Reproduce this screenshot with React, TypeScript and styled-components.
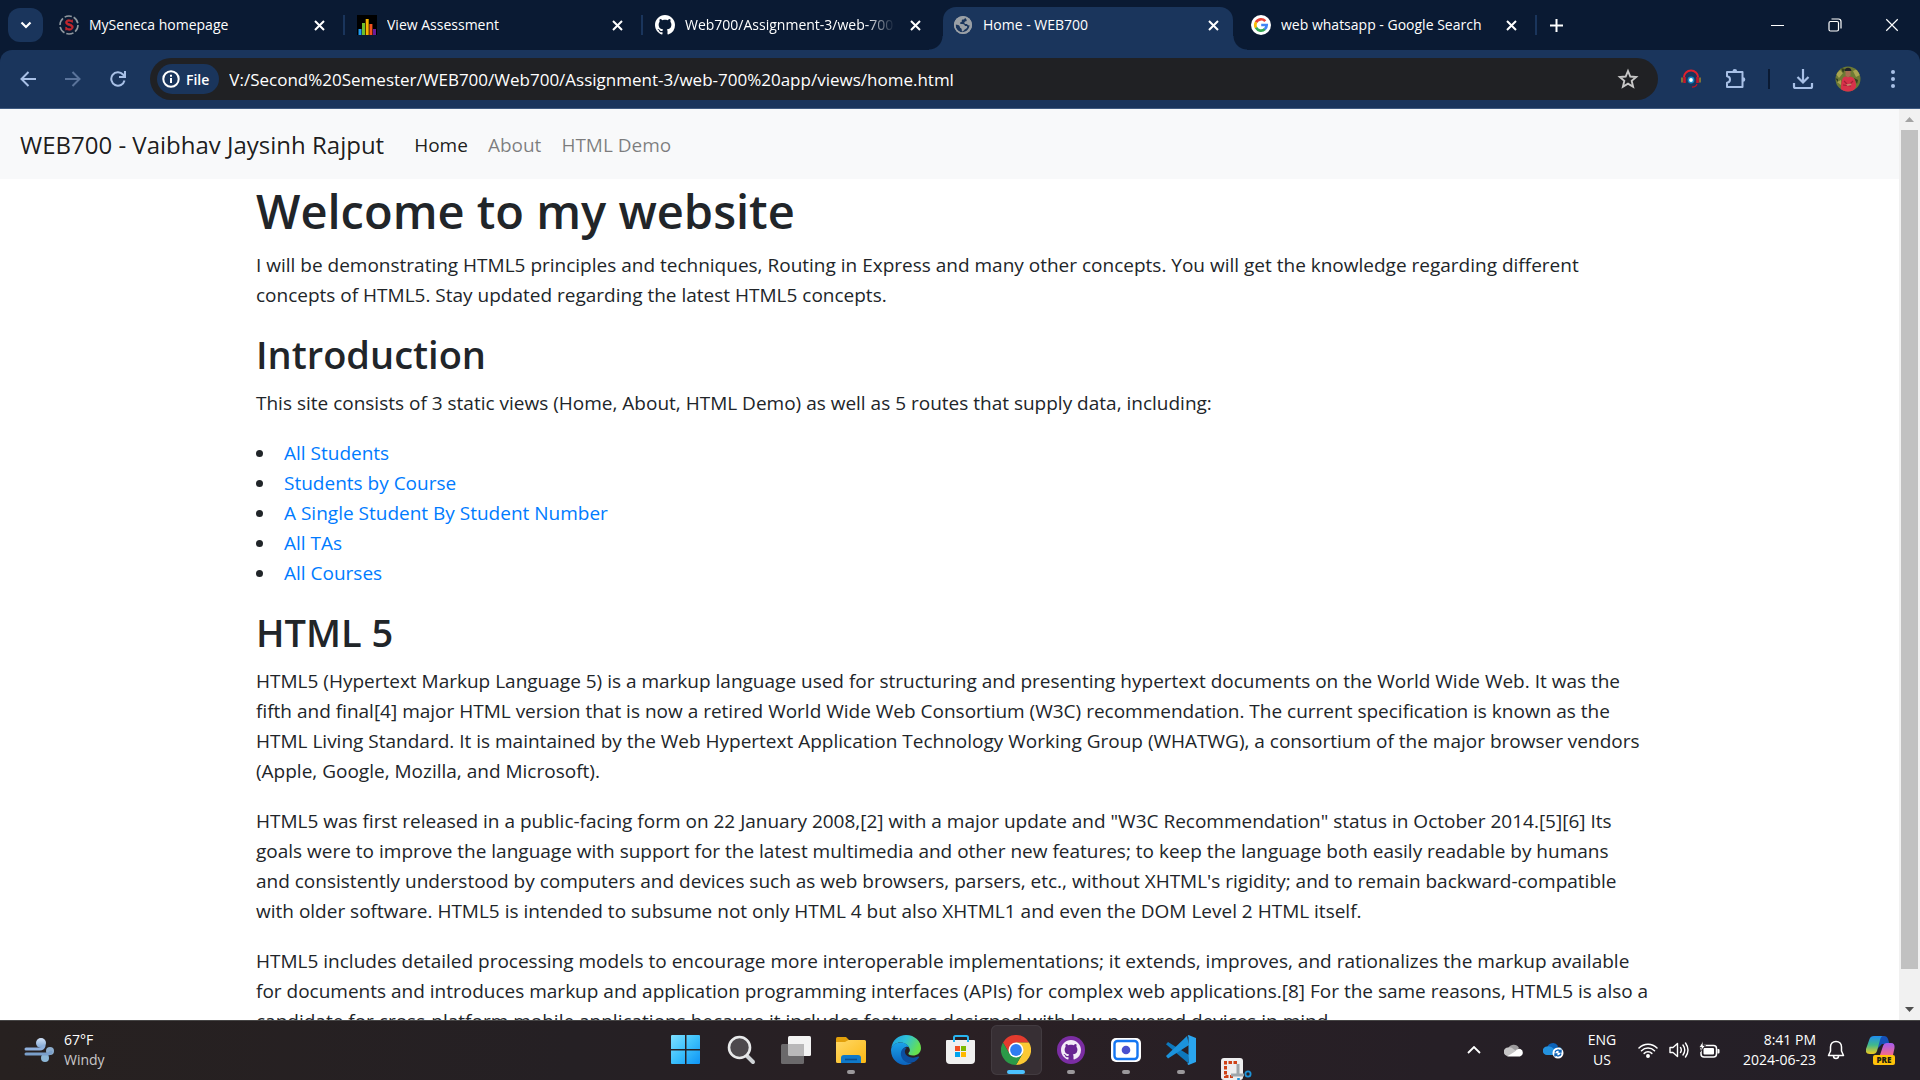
import React from "react";
import styled, { createGlobalStyle, css } from "styled-components";

const GlobalStyle = createGlobalStyle`
  *, *::before, *::after { box-sizing: border-box; }
  body {
    margin: 0;
    font-family: "Open Sans", "Noto Sans", sans-serif;
    overflow: hidden;
  }
  button { font: inherit; color: inherit; background: none; border: 0; padding: 0; cursor: pointer; }
  svg { display: block; flex: none; }
`;

const Desktop = styled.div`
  height: 100vh;
  display: flex;
  flex-direction: column;
  background: #fff;
`;

/* ---------- Browser tab strip ---------- */

const TabStrip = styled.header`
  flex: none;
  height: 50px;
  display: flex;
  align-items: center;
  padding-left: 8px;
  background: #0a1a33;
  color: #fff;
`;

const TabSearch = styled.button`
  flex: none;
  width: 35px;
  height: 34px;
  margin-right: 6px;
  border-radius: 12px;
  background: #1a355c;
  display: grid;
  place-items: center;
`;

const TabList = styled.nav`
  flex: 0 1 1490px;
  display: flex;
  align-self: stretch;
  min-width: 0;
`;

const Tab = styled.div<{ $active?: boolean; $divider?: boolean }>`
  position: relative;
  flex: 1;
  min-width: 0;
  display: flex;
  align-items: center;
  gap: 10px;
  padding: 0 18px 0 10px;
  font-size: 14px;
  line-height: 20px;

  ${(p) =>
    p.$divider &&
    css`
      &::after {
        content: "";
        position: absolute;
        right: 2px;
        top: 15px;
        width: 2px;
        height: 20px;
        background: #1a355c;
      }
    `}

  ${(p) =>
    p.$active &&
    css`
      &::before {
        content: "";
        position: absolute;
        inset: 7px 8px 0 0;
        border-radius: 13px 13px 0 0;
        background: #1a355c;
      }
    `}
`;

const TabFlare = styled.span<{ $side: "left" | "right" }>`
  position: absolute;
  bottom: 0;
  width: 14px;
  height: 14px;
  ${(p) =>
    p.$side === "left"
      ? css`
          left: -14px;
          background: radial-gradient(circle at 0 0, transparent 13px, #1a355c 14px);
        `
      : css`
          right: -6px;
          background: radial-gradient(circle at 100% 0, transparent 13px, #1a355c 14px);
        `}
`;

const TabTitle = styled.span<{ $fade?: boolean }>`
  position: relative;
  flex: 1;
  overflow: hidden;
  white-space: nowrap;
  ${(p) => p.$fade && css`mask-image: linear-gradient(90deg, #000 86%, transparent);`}
`;

const TabIcon = styled.span`
  position: relative;
  flex: none;
`;

const TabClose = styled.button`
  position: relative;
  flex: none;
  width: 20px;
  height: 20px;
  display: grid;
  place-items: center;
`;

const NewTab = styled.button`
  flex: none;
  width: 34px;
  height: 34px;
  display: grid;
  place-items: center;
`;

const WindowControls = styled.div`
  margin-left: auto;
  display: flex;
`;

const WindowButton = styled.button`
  width: 57px;
  height: 50px;
  display: grid;
  place-items: center;
`;

/* ---------- Browser toolbar ---------- */

const ToolbarBack = styled.div`
  flex: none;
  background: #0a1a33;
`;

const Toolbar = styled.div`
  height: 59px;
  display: flex;
  align-items: center;
  padding: 0 5px;
  border-radius: 12px 12px 0 0;
  background: #1a355c;
  border-bottom: 1px solid #3f5a80;
  color: #a8c0e6;
`;

const ToolButton = styled.button<{ $faded?: boolean }>`
  flex: none;
  width: 45px;
  height: 42px;
  display: grid;
  place-items: center;
  opacity: ${(p) => (p.$faded ? 0.45 : 1)};
`;

const Omnibox = styled.div`
  flex: 1;
  min-width: 0;
  height: 42px;
  margin: 0 10px;
  padding: 0 15px 0 7px;
  display: flex;
  align-items: center;
  gap: 10px;
  border-radius: 21px;
  background: #202124;
  color: #c7c7c7;
`;

const FileChip = styled.button`
  flex: none;
  height: 30px;
  padding: 0 10px 0 5px;
  display: flex;
  align-items: center;
  gap: 6px;
  border-radius: 15px;
  background: #1a355c;
  color: #fff;
  font-size: 14px;
  font-weight: 600;
`;

const Address = styled.input`
  flex: 1;
  min-width: 0;
  border: 0;
  outline: 0;
  padding: 2px 0 0;
  background: transparent;
  color: #fff;
  font: 17px/24px "Open Sans", "Noto Sans", sans-serif;
`;

const BookmarkButton = styled.button`
  flex: none;
  width: 30px;
  height: 30px;
  display: grid;
  place-items: center;
`;

const ToolDivider = styled.span`
  width: 2px;
  height: 20px;
  margin: 0 10px;
  background: #0a1a33;
`;

/* ---------- Web page ---------- */

const Viewport = styled.div`
  flex: 1;
  min-height: 0;
  display: flex;
`;

const Page = styled.div`
  flex: 1;
  min-width: 0;
  overflow: hidden;
  color: #212529;
  font-size: 19px;
  line-height: 30px;
`;

const Navbar = styled.nav`
  display: flex;
  align-items: center;
  height: 70px;
  padding: 2px 20px 0;
  background: #f8f9fa;
`;

const Brand = styled.a`
  margin-right: 20px;
  color: rgba(0, 0, 0, 0.9);
  font-size: 24px;
  text-decoration: none;
  white-space: nowrap;
`;

const NavLink = styled.a<{ $active?: boolean }>`
  padding: 10px;
  color: ${(p) => (p.$active ? "rgba(0,0,0,.9)" : "rgba(0,0,0,.5)")};
  text-decoration: none;
`;

const Container = styled.main`
  max-width: 1425px;
  margin: 0 auto;
  padding: 1px 10px 0 19px;
`;

const Title = styled.h1`
  margin: 0 0 8px;
  font-size: 47px;
  line-height: 62px;
  font-weight: 600;
`;

const Heading = styled.h2`
  margin: 0 0 10px;
  font-size: 38px;
  line-height: 48px;
  font-weight: 600;
`;

const Paragraph = styled.p`
  margin: 0 0 20px;
`;

const LinkList = styled.ul`
  margin: 0 0 20px;
  padding: 0;
  list-style: none;
`;

const LinkItem = styled.li`
  display: flex;
  align-items: center;
  gap: 21px;

  &::before {
    content: "";
    width: 7px;
    height: 7px;
    border-radius: 50%;
    background: #212529;
  }
`;

const TextLink = styled.a`
  color: #007bff;
  text-decoration: none;
`;

const Scrollbar = styled.div`
  flex: none;
  width: 21px;
  display: flex;
  flex-direction: column;
  align-items: center;
  background: #f1f1f1;
`;

const ScrollButton = styled.button`
  flex: none;
  width: 21px;
  height: 21px;
  display: grid;
  place-items: center;
`;

const ScrollTrack = styled.div`
  flex: 1;
  width: 17px;
  padding-bottom: 30px;
`;

const ScrollThumb = styled.div`
  height: 100%;
  background: #c1c1c1;
`;

/* ---------- Taskbar ---------- */

const Taskbar = styled.footer`
  flex: none;
  height: 60px;
  display: grid;
  grid-template-columns: 1fr auto 1fr;
  align-items: center;
  padding-bottom: 2px;
  border-top: 1px solid #464545;
  background: linear-gradient(90deg, #272120 0%, #252024 30%, #2a2024 50%, #261f26 75%, #241f27 100%);
  color: #fff;
  font-size: 14px;
  line-height: 20px;
`;

const Weather = styled.button`
  justify-self: start;
  display: flex;
  align-items: center;
  gap: 10px;
  padding-left: 24px;
  text-align: left;
`;

const Muted = styled.span`
  display: block;
  color: #c9c7c9;
`;

const Line = styled.span`
  display: block;
`;

const AppRow = styled.div`
  display: flex;
  padding-left: 2px;
`;

const AppButton = styled.button<{ $active?: boolean; $low?: boolean }>`
  position: relative;
  width: 51px;
  height: 50px;
  margin: 0 2px;
  display: grid;
  place-items: center;
  border-radius: 6px;
  padding-top: ${(p) => (p.$low ? "32px" : "0")};
  ${(p) => p.$active && css`background: #372f34; box-shadow: inset 0 0 0 1px #423b40;`}
`;

const Indicator = styled.span<{ $active?: boolean }>`
  position: absolute;
  bottom: 1px;
  left: 50%;
  transform: translateX(-50%);
  width: ${(p) => (p.$active ? "18px" : "8px")};
  height: 4px;
  border-radius: 2px;
  background: ${(p) => (p.$active ? "#4cc2ff" : "#9b989b")};
`;

const Tray = styled.div`
  justify-self: end;
  display: flex;
  align-items: center;
  padding-right: 14px;
`;

const TrayButton = styled.button<{ $width?: number }>`
  width: ${(p) => p.$width ?? 40}px;
  height: 44px;
  display: grid;
  place-items: center;
`;

const Clock = styled.button`
  width: 90px;
  text-align: right;
  white-space: nowrap;
`;

/* ---------- Drawings ---------- */

const Cross = ({ size = 11, width = 2 }: { size?: number; width?: number }) => (
  <svg width={size} height={size} viewBox="0 0 11 11" fill="none" stroke="currentColor" strokeWidth={width}>
    <path d="M1 1l9 9M10 1l-9 9" />
  </svg>
);

const SenecaIcon = () => (
  <svg width="20" height="20" viewBox="0 0 20 20">
    <circle cx="10" cy="10" r="9" fill="none" stroke="#8f979e" strokeWidth="1.6" strokeDasharray="7.4 2" />
    <path d="M13.4 7.4V4.8l-1 .6C9 4 6.600 5.200 6.600 7.400c0 3.600 6 2.600 6 5 0 2-3.800 1.900-5.800-.4v3.200l1-.7c3 1.500 6.400.3 6.400-2.500 0-3.800-6-2.700-6-4.700 0-1.600 3.500-1.500 5.200.1z" fill="#c3272e" stroke="#c3272e" strokeWidth=".8" />
  </svg>
);

const ChartIcon = () => (
  <svg width="20" height="20" viewBox="0 0 20 20">
    <path fill="#000" d="M0 0h20v20H0z" />
    <path fill="#1e9bf0" d="M1.500 14h3v6h-3z" />
    <path fill="#6cbf2c" d="M5 8h3v12H5z" />
    <path fill="#f5b400" d="M8.700 4h3v16h-3z" />
    <path fill="#f4511e" d="M12.400 9h3v11h-3z" />
    <path fill="#6a1b9a" d="M16 14h3v6h-3z" />
  </svg>
);

const OCTOCAT =
  "M8 0C3.580 0 0 3.580 0 8c0 3.540 2.290 6.530 5.470 7.590.4.070.55-.17.55-.38 0-.19-.01-.82-.01-1.490-2.010.37-2.530-.49-2.690-.94-.09-.23-.48-.94-.82-1.130-.28-.15-.68-.52-.01-.53.63-.01 1.080.58 1.230.82.72 1.210 1.870.87 2.330.66.070-.52.28-.87.51-1.070-1.780-.2-3.640-.89-3.640-3.950 0-.87.31-1.590.82-2.150-.08-.2-.36-1.020.08-2.120 0 0 .67-.21 2.200.82.64-.18 1.320-.27 2-.27s1.360.09 2 .27c1.530-1.040 2.200-.82 2.200-.82.44 1.100.16 1.920.08 2.120.51.56.82 1.270.82 2.150 0 3.070-1.870 3.750-3.650 3.950.29.25.54.73.54 1.480 0 1.070-.01 1.930-.01 2.200 0 .21.15.46.55.38A8.010 8.010 0 0016 8c0-4.420-3.580-8-8-8z";

const GithubIcon = () => (
  <svg width="20" height="20" viewBox="0 0 16 16">
    <path fill="#fff" d={OCTOCAT} />
  </svg>
);

const GlobeIcon = () => (
  <svg width="20" height="20" viewBox="0 0 20 20">
    <circle cx="10" cy="10" r="9" fill="#9aa0a6" />
    <path
      fill="#1a355c"
      d="M12 2.800c-.2 1.400-1 1.700-2.400 1.700-1 0-.8 1.300-.8 2.100-.2.900-1.700.5-1.900 1.400 0 .8.900 1 2.300 1 1.900 0 2.500.8 2.700 2 .8.300 1.900-.2 2.300.6.300 1-.6 2.200-1.600 2.300-1.500.2-1.500 2.100-3.200 2.700-.8.100-.4-1.700-.8-2.600-.5-1-1.700-1-1.800-2.200 0-.9-.8-1.400-1.700-1.700l-2.400-.7c-.5 4 2.300 7.500 6.300 7.800 4 .1 7.300-3 7.500-6.900-1 .4-1.700 0-2.200-.7-.6-.8-2-.2-2.700-1 -.8-1 .1-2 1.300-2.300.6-.2.9-.8.800-1.400-.5-.8-1-1.500-1.700-2.100z"
    />
    <circle cx="10" cy="10" r="8.300" fill="none" stroke="#9aa0a6" strokeWidth="1.600" />
  </svg>
);

const GoogleIcon = () => (
  <svg width="20" height="20" viewBox="0 0 20 20">
    <circle cx="10" cy="10" r="10" fill="#fff" />
    <g fill="none" strokeWidth="2.700">
      <path stroke="#ea4335" d="M14.300 6.200A5.700 5.700 0 0 0 5 7.300" />
      <path stroke="#fbbc05" d="M5.100 7.100a5.700 5.700 0 0 0 0 5.800" />
      <path stroke="#34a853" d="M5 12.700a5.700 5.700 0 0 0 8.900 1.400" />
      <path stroke="#4285f4" d="M13.700 14.300A5.700 5.700 0 0 0 15.700 10H10.200" />
    </g>
  </svg>
);

const StarIcon = () => (
  <svg width="22" height="22" viewBox="0 0 22 22" fill="none" stroke="currentColor" strokeWidth="1.900">
    <path d="M11 3l2.300 5.500 5.900.5-4.500 3.900 1.400 5.800-5.100-3.100-5.100 3.100 1.400-5.800L2.800 9l5.900-.5z" />
  </svg>
);

const HeadsetIcon = () => (
  <svg width="20" height="20" viewBox="0 0 20 20" fill="none">
    <path d="M3 8a7 6.500 0 0 1 14 0" stroke="#e0202c" strokeWidth="2" />
    <path d="M3.500 8v6M16.500 8v6" stroke="#c4182a" strokeWidth="2.600" />
    <path d="M1 8.500v5M19 8.500v5" stroke="#8a7a34" strokeWidth="1.800" />
    <path d="M16 15c-.5 2-2 3-5 3.200" stroke="#b5182a" strokeWidth="1.200" />
    <circle cx="10" cy="11" r="3.400" fill="#1387c4" />
    <circle cx="10" cy="11" r="1.900" fill="#fff" />
  </svg>
);

const PuzzleIcon = () => (
  <svg width="22" height="22" viewBox="0 0 22 22">
    <path
      fill="none"
      stroke="currentColor"
      strokeWidth="2"
      strokeLinejoin="round"
      d="M2 4h15.500v15H2v-4.300c2-.2 3-1.500 3-3.200s-1-3-3-3.200z"
    />
    <path fill="currentColor" d="M7.500 3.200a2.300 2.300 0 0 1 4.600 0zM18 9.200a2.300 2.300 0 0 1 0 4.600z" />
  </svg>
);

const DownloadIcon = () => (
  <svg width="22" height="22" viewBox="0 0 22 22" fill="none" stroke="currentColor" strokeWidth="2.200">
    <path d="M11 1v13M5.500 9l5.500 5.500L16.500 9M2 15v3.500q0 1.500 1.500 1.500h15q1.500 0 1.500-1.500V15" />
  </svg>
);

const Avatar = () => (
  <svg width="26" height="26" viewBox="0 0 26 26">
    <defs>
      <clipPath id="avatar-clip"><circle cx="13" cy="13" r="12.500" /></clipPath>
    </defs>
    <g clipPath="url(#avatar-clip)">
      <path fill="#6d7a34" d="M0 0h26v26H0z" />
      <path fill="#a9a450" d="M1 8l4-4 3 3-4 5zM18 5l4-2 3 6-4 2zM2 16l4-2v5z" />
      <path fill="#34401f" d="M6 2l4 1-2 4zM19 12l4 2-1 4zM0 12l3 1v3z" />
      <path fill="#d8324a" d="M6 24c0-6 .5-13 4-13.500l6 .2c4 1 5 5 5 10L18 26H7z" />
      <path fill="#a76d50" d="M10.500 4h5v5.500l-2.500 2-2.500-2z" />
      <path fill="#20222a" d="M9.500 5c0-4.500 7-4.500 7 0z" />
      <path stroke="#a32036" strokeWidth="1.200" fill="none" d="M9 15l3 3M18 15l-3 3M8 19l8 1" />
      <path fill="#c58a6b" d="M11 18.500l5-1 .5 1.500-4 1z" />
    </g>
  </svg>
);

const WindIcon = () => (
  <svg width="30" height="30" viewBox="0 0 30 30" fill="none">
    <defs>
      <linearGradient id="wind" x1="0" y1="0" x2="0" y2="1">
        <stop offset="0" stopColor="#d2e2f8" />
        <stop offset="1" stopColor="#7ca3cf" />
      </linearGradient>
    </defs>
    <circle cx="17" cy="8" r="5" fill="url(#wind)" />
    <path d="M2 14h14q3 0 4-3" stroke="#8fb0dc" strokeWidth="3" strokeLinecap="round" />
    <circle cx="26" cy="16" r="4" fill="#8dadcd" />
    <circle cx="21" cy="23" r="4" fill="#8db7d6" />
    <path d="M2 19h21q3 0 4-2" stroke="#7a9fca" strokeWidth="3" strokeLinecap="round" />
  </svg>
);

const WindowsIcon = () => (
  <svg width="30" height="30" viewBox="0 0 30 30">
    <defs>
      <linearGradient id="win" x1="0" y1="0" x2="1" y2="1">
        <stop offset="0" stopColor="#7fe0ff" />
        <stop offset=".5" stopColor="#3cc0fb" />
        <stop offset="1" stopColor="#0e94f5" />
      </linearGradient>
    </defs>
    <path fill="url(#win)" d="M0 1q0-1 1-1h13v14H0zM15.500 0H28q1 0 1 1v13H15.500zM0 15.500h14V29H1q-1 0-1-1zM15.500 15.500H29V28q0 1-1 1H15.500z" />
  </svg>
);

const SearchIcon = () => (
  <svg width="30" height="30" viewBox="0 0 30 30">
    <path d="M20 20l7 7" stroke="#cfd3d6" strokeWidth="4" strokeLinecap="round" />
    <circle cx="13.500" cy="12.500" r="10.500" fill="#4d494d" stroke="#e8e9ea" strokeWidth="2.600" />
  </svg>
);

const TaskViewIcon = () => (
  <svg width="30" height="30" viewBox="0 0 30 30">
    <rect x="7" y="1" width="23" height="20" rx="1.500" fill="#f3f3f3" />
    <rect x="0" y="9" width="23" height="20" rx="1.500" fill="#6b696b" />
    <path fill="#b9b8b9" d="M7 9h16v12H8.500Q7 21 7 19.500z" />
  </svg>
);

const FolderIcon = () => (
  <svg width="30" height="30" viewBox="0 0 30 30">
    <defs>
      <linearGradient id="folder" x1="0" y1="0" x2="1" y2="1">
        <stop offset="0" stopColor="#ffd866" />
        <stop offset="1" stopColor="#fbb813" />
      </linearGradient>
    </defs>
    <path fill="#e2a00b" d="M0 3.500Q0 2 1.500 2H10l3.500 3.500L10 9H0z" />
    <path fill="url(#folder)" d="M0 7h9l3.500-2H28.500Q30 5 30 6.500v20q0 1.500-1.500 1.500h-27Q0 28 0 26.500z" />
    <path fill="#0f79c9" d="M5 28v-5q0-3 3-3h14q3 0 3 3v5z" />
    <path stroke="#0a4f8f" strokeWidth="1.600" d="M9 24.500h12" />
  </svg>
);

const EdgeIcon = () => (
  <svg width="30" height="30" viewBox="0 0 30 30">
    <defs>
      <linearGradient id="edge-top" x1="0" y1="0" x2="1" y2=".4">
        <stop offset="0" stopColor="#1b9de2" />
        <stop offset=".5" stopColor="#2fc2d8" />
        <stop offset="1" stopColor="#66e04e" />
      </linearGradient>
      <linearGradient id="edge-left" x1="0" y1="0" x2="0" y2="1">
        <stop offset="0" stopColor="#1ba3ea" />
        <stop offset="1" stopColor="#0b62bd" />
      </linearGradient>
    </defs>
    <path fill="url(#edge-top)" d="M.3 13C1.500 5 7.500 0 15 0c9 0 15 6.500 15 13 0 5-4 7.500-8 7.500-3.500 0-5-1.300-4.500-2.500 1.300-1.200 1.500-2.300 1.300-3.500C18 10 13.500 7.500 9.500 7.500 5 7.500 1.500 10 .3 13z" />
    <path fill="url(#edge-left)" d="M0 15c0-4.500 4.500-7.500 9.500-7.500 4 0 7.500 2 8.800 5-3-2-7 .5-7.300 5-.3 6 4.500 11 10 10.500C13 33 0 28 0 15z" />
    <path fill="#0c4fa0" d="M14 12.500c-4 1.500-5 6-3.500 9.500C13 28.500 22 31 28 22.500c.5-.8-.2-1.300-1-.9-5 2.300-12 .8-13-4-.4-2 .2-3.800 2-4.900z" />
  </svg>
);

const StoreIcon = () => (
  <svg width="30" height="30" viewBox="0 0 30 30">
    <path fill="none" stroke="#28b5f0" strokeWidth="2" d="M8 8V2.500Q8 1 9.500 1h11Q22 1 22 2.500V8" />
    <path fill="#f0f0f0" d="M0 6q0-1 1-1h27q1 0 1 1v19q0 4-4 4H4q-4 0-4-4z" />
    <path fill="none" stroke="#28b5f0" strokeWidth="2" d="M8 7V4M22 7V4" />
    <path fill="#f25022" d="M9 11h5v5H9z" />
    <path fill="#7fba00" d="M15 11h5v5h-5z" />
    <path fill="#00a4ef" d="M9 17h5v5H9z" />
    <path fill="#ffb900" d="M15 17h5v5h-5z" />
  </svg>
);

const ChromeIcon = () => (
  <svg width="30" height="30" viewBox="0 0 30 30">
    <path fill="#e33b2e" d="M2 7.500A15 15 0 0 1 28 7.500H15l-6.500 11.250z" />
    <path fill="#fcc934" d="M28 7.500A15 15 0 0 1 15 30l6.500-11.250L15 7.500z" />
    <path fill="#2b9a48" d="M15 30A15 15 0 0 1 2 7.500l6.500 11.250h13z" />
    <circle cx="15" cy="15" r="7.500" fill="#fff" />
    <circle cx="15" cy="15" r="5.900" fill="#2f7df0" />
  </svg>
);

const GithubDesktopIcon = () => (
  <svg width="30" height="30" viewBox="0 0 30 30">
    <circle cx="15" cy="15" r="14" fill="#7b2da3" />
    <circle cx="15" cy="15" r="10" fill="#682492" />
    <g transform="translate(5 5) scale(1.250)"><path fill="#f3ebf7" d={OCTOCAT} /></g>
  </svg>
);

const CameraIcon = () => (
  <svg width="30" height="30" viewBox="0 0 30 30">
    <rect x="0" y="3" width="30" height="24" rx="5" fill="#fff" />
    <rect x="3.500" y="6" width="23" height="18" rx="3" fill="#fff" stroke="#1476f2" strokeWidth="2.400" />
    <circle cx="15" cy="15" r="4.300" fill="#4a50cf" />
  </svg>
);

const CodeIcon = () => (
  <svg width="30" height="30" viewBox="0 0 30 30">
    <path fill="#0d78bd" d="M2 7l-2 2.200L22 28l1-8z" />
    <path fill="#1b93dc" d="M2 23.500l-2-2.500L21 1l2 9z" />
    <path fill="#2aa5ee" d="M22.500 0L30 3v24l-7.500 3-1.500-1.500c.7.300 1.500 0 1.500-1V2.500c0-1-.8-1.500-1.500-1z" />
  </svg>
);

const SnipIcon = () => (
  <svg width="32" height="26" viewBox="0 0 32 26">
    <rect x="1" y="1" width="22" height="22" rx="3" fill="#eeeeef" />
    <path d="M17 5.500H5.500v14H13" fill="none" stroke="#cf4218" strokeWidth="3" strokeDasharray="3.500 1.500" />
    <path d="M18 7v12M11 18h13" stroke="#9ea5aa" strokeWidth="3" />
    <circle cx="28" cy="17" r="2.600" fill="none" stroke="#1d93d8" strokeWidth="1.800" />
    <path d="M18.500 21v5" stroke="#1d93d8" strokeWidth="2.600" />
  </svg>
);

const CloudIcon = () => (
  <svg width="20" height="14" viewBox="0 0 20 14">
    <path fill="#9c9a9c" d="M4 6a6 6 0 0 1 11-1l-5 5z" />
    <path fill="#c6c5c6" d="M4 13a4 4 0 0 1 0-8.500q3-1 6 2l5 3-4 3.500z" />
    <path fill="#fff" d="M3 13.500L11 8.500q2-3.500 5.500-2.500A4 4 0 0 1 16 13.500z" />
  </svg>
);

const SyncIcon = () => (
  <svg width="22" height="18" viewBox="0 0 22 18">
    <path fill="#0b62b8" d="M4 7a6 6 0 0 1 11-2l-3 6z" />
    <path fill="#2492df" d="M4 14a4.200 4.200 0 0 1 0-8.500q4-1 7 2.500l6-2q3 2 2 5l-4 3z" />
    <circle cx="15" cy="12" r="5.500" fill="#fff" />
    <path fill="none" stroke="#0b62b8" strokeWidth="1.400" d="M12 11.500a3 3 0 0 1 5.500-1M18 12.500a3 3 0 0 1-5.500 1M18 8.500v2.500h-2.500M12 15.500V13h2.500" />
  </svg>
);

const WifiIcon = () => (
  <svg width="20" height="16" viewBox="0 0 20 16" fill="none" stroke="#fff" strokeWidth="1.500" strokeLinecap="round">
    <path d="M1 6a12.500 12.500 0 0 1 18 0M3.500 8.700a9.200 9.200 0 0 1 13 0M6.200 11.400a5.400 5.400 0 0 1 7.600 0" />
    <circle cx="10" cy="14" r="1.200" fill="#fff" />
  </svg>
);

const VolumeIcon = () => (
  <svg width="20" height="18" viewBox="0 0 20 18" fill="none" stroke="#fff" strokeWidth="1.400" strokeLinecap="round" strokeLinejoin="round">
    <path d="M1 6.500h3l4.500-4v13l-4.500-4H1zM11.500 6.500q1.600 2.500 0 5M14 4q3.500 5 0 10M16.500 2q5 7 0 14" />
  </svg>
);

const BatteryIcon = () => (
  <svg width="22" height="18" viewBox="0 0 22 18">
    <rect x="3" y="4.500" width="15.500" height="11.500" rx="3" fill="none" stroke="#fff" strokeWidth="1.500" />
    <rect x="5.500" y="7" width="10.500" height="6.500" rx="1" fill="#fff" />
    <path fill="#fff" d="M19.500 8h1q1 0 1 1v2.500q0 1-1 1h-1z" />
    <path fill="#fff" stroke="#252025" strokeWidth=".8" d="M5 0L1 6.500h2.500L2 11l5.500-6.500H5z" />
  </svg>
);

const BellIcon = () => (
  <svg width="18" height="20" viewBox="0 0 18 20" fill="none" stroke="#fff" strokeWidth="1.500" strokeLinejoin="round">
    <path d="M9 1.500c-3.500 0-5.500 2.500-5.500 5.500v4L1.500 15.500h15L14.500 11V7C14.500 4 12.500 1.500 9 1.500zM6.500 16a2.500 2.500 0 0 0 5 0" />
  </svg>
);

const CopilotIcon = () => (
  <svg width="30" height="30" viewBox="0 0 30 30">
    <defs>
      <linearGradient id="cp-left" x1="0" y1="0" x2="0" y2="1">
        <stop offset="0" stopColor="#1f8df0" />
        <stop offset=".5" stopColor="#3fb98c" />
        <stop offset="1" stopColor="#f2cb1c" />
      </linearGradient>
      <linearGradient id="cp-right" x1="0" y1="0" x2="0" y2="1">
        <stop offset="0" stopColor="#a45cf0" />
        <stop offset="1" stopColor="#f46a8c" />
      </linearGradient>
    </defs>
    <path fill="#1551b8" d="M11 1h7q3 0 4 3l1.500 5H16l-5 5z" />
    <path fill="url(#cp-left)" d="M8 1h9q-2 0-3 4l-3 11q-1 3-4 3H4q-5 0-4-5L3.500 4Q4.500 1 8 1z" />
    <path fill="url(#cp-right)" d="M17 11q1-3 4-3h4q4 0 3.500 5L27 20H14z" />
    <rect x="7" y="20" width="22" height="10" rx="2" fill="#ffc20a" />
    <text x="18" y="28" fontSize="8" fontWeight="800" textAnchor="middle" fill="#201a10">PRE</text>
  </svg>
);

/* ---------- Content ---------- */

const tabs = [
  { title: "MySeneca homepage", icon: <SenecaIcon />, divider: true },
  { title: "View Assessment", icon: <ChartIcon />, divider: true },
  { title: "Web700/Assignment-3/web-700", icon: <GithubIcon />, fade: true },
  { title: "Home - WEB700", icon: <GlobeIcon />, active: true },
  { title: "web whatsapp - Google Search", icon: <GoogleIcon />, divider: true },
];

const routes = ["All Students", "Students by Course", "A Single Student By Student Number", "All TAs", "All Courses"];

const apps = [
  { name: "Start", icon: <WindowsIcon /> },
  { name: "Search", icon: <SearchIcon /> },
  { name: "Task View", icon: <TaskViewIcon /> },
  { name: "File Explorer", icon: <FolderIcon />, running: true },
  { name: "Microsoft Edge", icon: <EdgeIcon /> },
  { name: "Microsoft Store", icon: <StoreIcon /> },
  { name: "Google Chrome", icon: <ChromeIcon />, running: true, active: true },
  { name: "GitHub Desktop", icon: <GithubDesktopIcon />, running: true },
  { name: "Screen Recorder", icon: <CameraIcon />, running: true },
  { name: "Visual Studio Code", icon: <CodeIcon />, running: true },
  { name: "Snipping Tool", icon: <SnipIcon />, low: true },
];

export default function App() {
  return (
    <Desktop>
      <GlobalStyle />
      <TabStrip>
        <TabSearch aria-label="Search tabs">
          <svg width="12" height="8" viewBox="0 0 12 8" fill="none" stroke="#fff" strokeWidth="2.200">
            <path d="M1.500 1.500L6 6l4.500-4.500" />
          </svg>
        </TabSearch>
        <TabList aria-label="Tabs">
          {tabs.map((tab) => (
            <Tab key={tab.title} $active={tab.active} $divider={tab.divider}>
              {tab.active && <TabFlare $side="left" />}
              {tab.active && <TabFlare $side="right" />}
              <TabIcon>{tab.icon}</TabIcon>
              <TabTitle $fade={tab.fade}>{tab.title}</TabTitle>
              <TabClose aria-label={`Close ${tab.title}`}><Cross /></TabClose>
            </Tab>
          ))}
        </TabList>
        <NewTab aria-label="New tab">
          <svg width="13" height="13" viewBox="0 0 13 13" stroke="#fff" strokeWidth="2"><path d="M6.500 0v13M0 6.500h13" /></svg>
        </NewTab>
        <WindowControls>
          <WindowButton aria-label="Minimize">
            <svg width="13" height="13" viewBox="0 0 13 13" stroke="#fff"><path d="M0 6.500h13" /></svg>
          </WindowButton>
          <WindowButton aria-label="Restore">
            <svg width="14" height="14" viewBox="0 0 14 14" fill="none" stroke="#fff" strokeWidth="1.200">
              <rect x="1" y="3.500" width="9.500" height="9.500" rx="1.500" />
              <path d="M3.500 1h7Q13 1 13 3.500v7" />
            </svg>
          </WindowButton>
          <WindowButton aria-label="Close window"><Cross size={14} width={0.9} /></WindowButton>
        </WindowControls>
      </TabStrip>

      <ToolbarBack>
        <Toolbar>
          <ToolButton aria-label="Back">
            <svg width="16" height="16" viewBox="0 0 16 16" fill="none" stroke="currentColor" strokeWidth="2"><path d="M16 8H2M8.500 1L1.500 8l7 7" /></svg>
          </ToolButton>
          <ToolButton aria-label="Forward" $faded>
            <svg width="16" height="16" viewBox="0 0 16 16" fill="none" stroke="currentColor" strokeWidth="2"><path d="M0 8h14M7.500 1l7 7-7 7" /></svg>
          </ToolButton>
          <ToolButton aria-label="Reload">
            <svg width="16" height="16" viewBox="0 0 16 16" fill="none" stroke="currentColor" strokeWidth="2">
              <path d="M14.500 9.500A6.700 6.700 0 1 1 13 3.500L14.500 5.500M15 0v6H9" />
            </svg>
          </ToolButton>
          <Omnibox>
            <FileChip>
              <svg width="18" height="18" viewBox="0 0 18 18" fill="none" stroke="#fff" strokeWidth="2">
                <circle cx="9" cy="9" r="7.700" /><path d="M9 8v5M9 4.800v2" />
              </svg>
              File
            </FileChip>
            <Address aria-label="Address" readOnly value="V:/Second%20Semester/WEB700/Web700/Assignment-3/web-700%20app/views/home.html" />
            <BookmarkButton aria-label="Bookmark this tab"><StarIcon /></BookmarkButton>
          </Omnibox>
          <ToolButton aria-label="Headset extension"><HeadsetIcon /></ToolButton>
          <ToolButton aria-label="Extensions"><PuzzleIcon /></ToolButton>
          <ToolDivider />
          <ToolButton aria-label="Downloads"><DownloadIcon /></ToolButton>
          <ToolButton aria-label="Profile"><Avatar /></ToolButton>
          <ToolButton aria-label="Menu">
            <svg width="4" height="18" viewBox="0 0 4 18" fill="currentColor">
              <circle cx="2" cy="2" r="2" /><circle cx="2" cy="9" r="2" /><circle cx="2" cy="16" r="2" />
            </svg>
          </ToolButton>
        </Toolbar>
      </ToolbarBack>

      <Viewport>
        <Page>
          <Navbar>
            <Brand href="#">WEB700 - Vaibhav Jaysinh Rajput</Brand>
            <NavLink href="#" $active>Home</NavLink>
            <NavLink href="#">About</NavLink>
            <NavLink href="#">HTML Demo</NavLink>
          </Navbar>
          <Container>
            <Title>Welcome to my website</Title>
            <Paragraph>
              I will be demonstrating HTML5 principles and techniques, Routing in Express and many other concepts. You will get the knowledge regarding different concepts of HTML5. Stay updated regarding the latest HTML5 concepts.
            </Paragraph>
            <Heading>Introduction</Heading>
            <Paragraph>This site consists of 3 static views (Home, About, HTML Demo) as well as 5 routes that supply data, including:</Paragraph>
            <LinkList>
              {routes.map((route) => (
                <LinkItem key={route}><TextLink href="#">{route}</TextLink></LinkItem>
              ))}
            </LinkList>
            <Heading>HTML 5</Heading>
            <Paragraph>
              HTML5 (Hypertext Markup Language 5) is a markup language used for structuring and presenting hypertext documents on the World Wide Web. It was the fifth and final[4] major HTML version that is now a retired World Wide Web Consortium (W3C) recommendation. The current specification is known as the HTML Living Standard. It is maintained by the Web Hypertext Application Technology Working Group (WHATWG), a consortium of the major browser vendors (Apple, Google, Mozilla, and Microsoft).
            </Paragraph>
            <Paragraph>
              HTML5 was first released in a public-facing form on 22 January 2008,[2] with a major update and "W3C Recommendation" status in October 2014.[5][6] Its goals were to improve the language with support for the latest multimedia and other new features; to keep the language both easily readable by humans<br />
              and consistently understood by computers and devices such as web browsers, parsers, etc., without XHTML's rigidity; and to remain backward-compatible with older software. HTML5 is intended to subsume not only HTML 4 but also XHTML1 and even the DOM Level 2 HTML itself.
            </Paragraph>
            <Paragraph>
              HTML5 includes detailed processing models to encourage more interoperable implementations; it extends, improves, and rationalizes the markup available for documents and introduces markup and application programming interfaces (APIs) for complex web applications.[8] For the same reasons, HTML5 is also a candidate for cross-platform mobile applications because it includes features designed with low-powered devices in mind.
            </Paragraph>
          </Container>
        </Page>
        <Scrollbar>
          <ScrollButton aria-label="Scroll up">
            <svg width="9" height="5" viewBox="0 0 9 5"><path fill="#a3a3a3" d="M4.500 0L9 5H0z" /></svg>
          </ScrollButton>
          <ScrollTrack><ScrollThumb /></ScrollTrack>
          <ScrollButton aria-label="Scroll down">
            <svg width="9" height="5" viewBox="0 0 9 5"><path fill="#505050" d="M4.500 5L9 0H0z" /></svg>
          </ScrollButton>
        </Scrollbar>
      </Viewport>

      <Taskbar>
        <Weather>
          <WindIcon />
          <span>
            <Line>67°F</Line>
            <Muted>Windy</Muted>
          </span>
        </Weather>
        <AppRow>
          {apps.map((app) => (
            <AppButton key={app.name} aria-label={app.name} $active={app.active} $low={app.low}>
              {app.icon}
              {app.running && <Indicator $active={app.active} />}
            </AppButton>
          ))}
        </AppRow>
        <Tray>
          <TrayButton aria-label="Show hidden icons">
            <svg width="14" height="8" viewBox="0 0 14 8" fill="none" stroke="#fff" strokeWidth="1.800"><path d="M1 7l6-6 6 6" /></svg>
          </TrayButton>
          <TrayButton aria-label="Cloud"><CloudIcon /></TrayButton>
          <TrayButton aria-label="OneDrive"><SyncIcon /></TrayButton>
          <TrayButton $width={56}><span><Line>ENG</Line><Line>US</Line></span></TrayButton>
          <TrayButton aria-label="Network" $width={36}><WifiIcon /></TrayButton>
          <TrayButton aria-label="Volume" $width={26}><VolumeIcon /></TrayButton>
          <TrayButton aria-label="Battery" $width={34}><BatteryIcon /></TrayButton>
          <Clock><Line>8:41 PM</Line><Line>2024-06-23</Line></Clock>
          <TrayButton aria-label="Notifications"><BellIcon /></TrayButton>
          <TrayButton aria-label="Copilot" $width={50}><CopilotIcon /></TrayButton>
        </Tray>
      </Taskbar>
    </Desktop>
  );
}
